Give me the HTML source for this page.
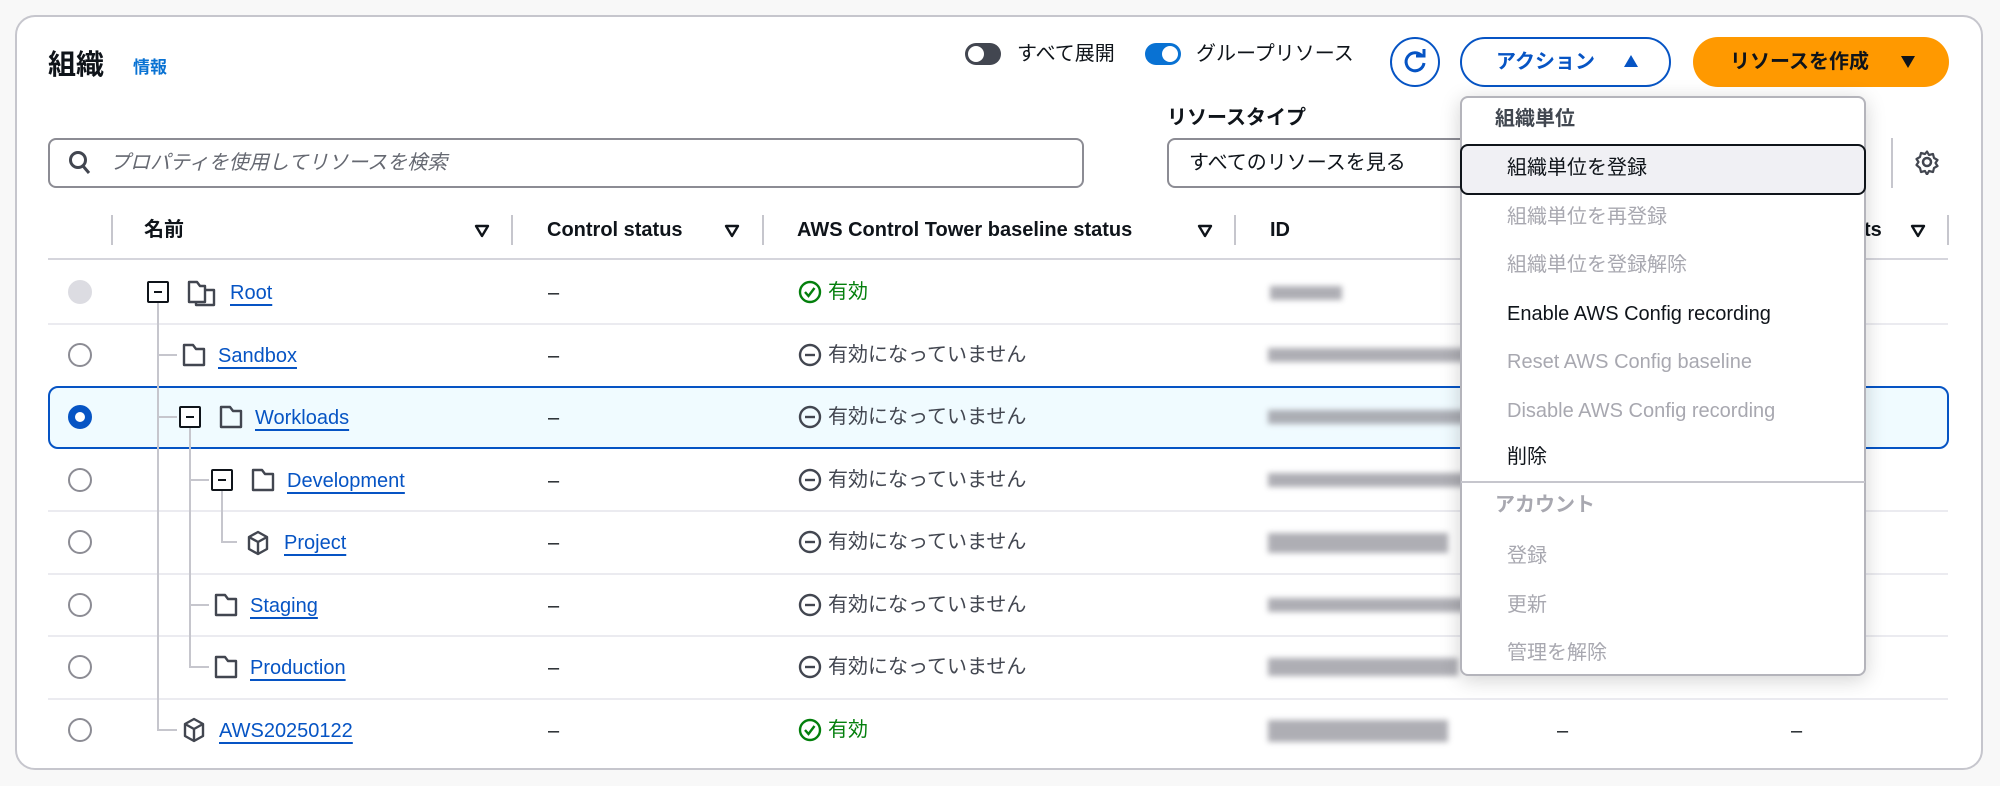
<!DOCTYPE html>
<html><head><meta charset="utf-8"><style>
*{box-sizing:border-box;margin:0;padding:0}
body{width:2000px;height:786px;background:#f8f8f8;font-family:"Liberation Sans","Noto Sans CJK JP",sans-serif;color:#0f141a;position:relative;overflow:hidden}
.a{position:absolute;white-space:nowrap;line-height:24px}
.card{position:absolute;left:15px;top:15px;width:1968px;height:755px;background:#fff;border:2px solid #c6c6cd;border-radius:20px}
.blue{color:#0654c4}
.lnk{color:#0654c4;text-decoration:underline;text-underline-offset:5px;text-decoration-thickness:2px;font-size:20px}
.hd{font-size:20px;font-weight:bold;color:#0f141a}
.sep{position:absolute;width:2px;height:30px;background:#c6c6cd;top:215px}
.rowline{position:absolute;left:48px;width:1900px;height:2px;background:#ebebf0}
.radio{position:absolute;left:68px;width:24px;height:24px;border:2px solid #8c8c94;border-radius:50%;background:#fff}
.dash{position:absolute;left:548px;font-size:20px;line-height:24px}
.st{position:absolute;left:798px;font-size:20px;line-height:24px;color:#424650;display:flex;align-items:center;gap:6px}
.st.ok{color:#037f0c}
.id{position:absolute;left:1268px;height:14px;background:#9a9aa2;filter:blur(3px);opacity:.8}
.vl{position:absolute;width:2px;background:#c6c6cd}
.hl{position:absolute;height:2px;background:#c6c6cd}
.box{position:absolute;width:22px;height:22px;border:2px solid #0f141a;border-radius:2px;background:#fff}
.box:after{content:"";position:absolute;left:5px;top:8px;width:8px;height:2px;background:#0f141a}
.mi{position:absolute;left:1507px;font-size:20px;line-height:24px;white-space:nowrap}
.dis{color:#a8a8b0}
</style></head><body>
<div class="card"></div>
<div class="a" style="left:48px;top:50px;font-size:28px;line-height:30px;font-weight:bold">組織</div>
<div class="a" style="left:133px;top:56px;font-size:17px;font-weight:bold;color:#0972d3">情報</div>

<div class="a" style="left:965px;top:43px;width:36px;height:22px;border-radius:11px;background:#424650"></div>
<div class="a" style="left:968px;top:46px;width:16px;height:16px;border-radius:50%;background:#fff"></div>
<div class="a" style="left:1017px;top:42px;font-size:20px">すべて展開</div>
<div class="a" style="left:1145px;top:43px;width:36px;height:22px;border-radius:11px;background:#0972d3"></div>
<div class="a" style="left:1162px;top:46px;width:16px;height:16px;border-radius:50%;background:#fff"></div>
<div class="a" style="left:1196px;top:42px;font-size:20px">グループリソース</div>

<div class="a" style="left:1390px;top:37px;width:50px;height:50px;border:2px solid #0654c4;border-radius:50%"></div>
<svg class="a" style="left:1402px;top:49px" width="26" height="26" viewBox="0 0 26 26"><path d="M20 7A9 9 0 1 0 22 14" fill="none" stroke="#0654c4" stroke-width="3"/><path d="M14 7h8V0" fill="none" stroke="#0654c4" stroke-width="3"/></svg>

<div class="a" style="left:1460px;top:37px;width:211px;height:50px;border:2px solid #0654c4;border-radius:25px"></div>
<div class="a blue" style="left:1496px;top:50px;font-size:20px;font-weight:bold">アクション</div>
<svg class="a" style="left:1623px;top:54px" width="16" height="14"><path d="M8 1L15 13H1z" fill="#0654c4"/></svg>
<div class="a" style="left:1693px;top:37px;width:256px;height:50px;background:#ff9900;border-radius:25px"></div>
<div class="a" style="left:1730px;top:50px;font-size:20px;font-weight:bold">リソースを作成</div>
<svg class="a" style="left:1900px;top:55px" width="16" height="14"><path d="M1 1H15L8 13z" fill="#0f141a"/></svg>

<div class="a" style="left:1167px;top:106px;font-size:20px;font-weight:bold">リソースタイプ</div>
<div class="a" style="left:48px;top:138px;width:1036px;height:50px;border:2px solid #8c8c94;border-radius:8px"></div>
<svg class="a" style="left:68px;top:150px" width="24" height="26" viewBox="0 0 24 26"><circle cx="10" cy="10" r="7.5" fill="none" stroke="#424650" stroke-width="3"/><path d="M15 16l6 7" stroke="#424650" stroke-width="3"/></svg>
<div class="a" style="left:110px;top:151px;font-size:20px;font-style:italic;color:#656871">プロパティを使用してリソースを検索</div>
<div class="a" style="left:1167px;top:138px;width:320px;height:50px;border:2px solid #8c8c94;border-radius:8px"></div>
<div class="a" style="left:1189px;top:151px;font-size:20px">すべてのリソースを見る</div>
<div class="a" style="left:1891px;top:138px;width:2px;height:50px;background:#c6c6cd"></div>
<svg class="a" style="left:1914px;top:149px" width="26" height="26" viewBox="0 0 26 26"><circle cx="13" cy="13" r="4" fill="none" stroke="#424650" stroke-width="2.5"/><path d="M13 2.5l2 3.5 4-1 1 4 3.5 2-2 3 2 3-3.5 2-1 4-4-1-2 3.5-2-3.5-4 1-1-4L2.5 16l2-3-2-3 3.5-2 1-4 4 1z" fill="none" stroke="#424650" stroke-width="2.2" stroke-linejoin="round"/></svg>

<div class="sep" style="left:111px"></div><div class="sep" style="left:511px"></div><div class="sep" style="left:762px"></div><div class="sep" style="left:1234px"></div><div class="sep" style="left:1947px"></div>
<div class="a hd" style="left:144px;top:218px">名前</div>
<div class="a hd" style="left:547px;top:218px">Control status</div>
<div class="a hd" style="left:797px;top:218px">AWS Control Tower baseline status</div>
<div class="a hd" style="left:1270px;top:218px">ID</div>
<div class="a hd" style="left:1864px;top:218px">ts</div>
<svg class="a" style="left:474px;top:224px" width="16" height="14"><path d="M2 2H14L8 12z" fill="none" stroke="#0f141a" stroke-width="2.4" stroke-linejoin="round"/></svg>
<svg class="a" style="left:724px;top:224px" width="16" height="14"><path d="M2 2H14L8 12z" fill="none" stroke="#0f141a" stroke-width="2.4" stroke-linejoin="round"/></svg>
<svg class="a" style="left:1197px;top:224px" width="16" height="14"><path d="M2 2H14L8 12z" fill="none" stroke="#0f141a" stroke-width="2.4" stroke-linejoin="round"/></svg>
<svg class="a" style="left:1910px;top:224px" width="16" height="14"><path d="M2 2H14L8 12z" fill="none" stroke="#0f141a" stroke-width="2.4" stroke-linejoin="round"/></svg>
<div class="rowline" style="top:258px;background:#d5d5dc"></div>

<div class="rowline" style="top:323px"></div>
<div class="rowline" style="top:510px"></div>
<div class="rowline" style="top:573px"></div>
<div class="rowline" style="top:635px"></div>
<div class="rowline" style="top:698px"></div>
<div class="a" style="left:48px;top:386px;width:1901px;height:63px;border:2px solid #0654c4;border-radius:10px;background:#f0fbff"></div>

<div class="radio" style="top:280px;background:#dcdce2;border-color:#dcdce2"></div>
<div class="radio" style="top:343px"></div>
<div class="radio" style="top:405px;border:7px solid #0654c4"></div>
<div class="radio" style="top:468px"></div>
<div class="radio" style="top:530px"></div>
<div class="radio" style="top:593px"></div>
<div class="radio" style="top:655px"></div>
<div class="radio" style="top:718px"></div>

<div class="vl" style="left:157px;top:300px;height:431px"></div>
<div class="hl" style="left:157px;top:354px;width:20px"></div>
<div class="hl" style="left:157px;top:416px;width:20px"></div>
<div class="hl" style="left:157px;top:729px;width:20px"></div>
<div class="vl" style="left:189px;top:425px;height:243px"></div>
<div class="hl" style="left:189px;top:479px;width:20px"></div>
<div class="hl" style="left:189px;top:604px;width:20px"></div>
<div class="hl" style="left:189px;top:666px;width:20px"></div>
<div class="vl" style="left:221px;top:488px;height:55px"></div>
<div class="hl" style="left:221px;top:541px;width:16px"></div>

<div class="box" style="left:147px;top:281px"></div>
<div class="box" style="left:179px;top:406px"></div>
<div class="box" style="left:211px;top:469px"></div>

<svg width="0" height="0" style="position:absolute"><defs>
<symbol id="fold" viewBox="0 0 24 24"><path d="M2 2h9l3 4h8v16H2z" fill="none" stroke="#424650" stroke-width="2.4" stroke-linejoin="round"/></symbol>
<symbol id="cube" viewBox="0 0 24 26"><path d="M12 2l9 5v12l-9 5-9-5V7z M3 7l9 5 9-5 M12 12v12" fill="none" stroke="#424650" stroke-width="2.4" stroke-linejoin="round"/></symbol>
</defs></svg>
<svg class="a" style="left:187px;top:280px" width="30" height="28" viewBox="0 0 30 28"><path d="M2 2h8l3 4h5v16H2z" fill="none" stroke="#424650" stroke-width="2.4" stroke-linejoin="round"/><path d="M18 10h9v15H9v-3" fill="none" stroke="#424650" stroke-width="2.4" stroke-linejoin="round"/></svg>
<svg class="a" style="left:182px;top:343px" width="24" height="24"><use href="#fold"/></svg>
<svg class="a" style="left:219px;top:405px" width="24" height="24"><use href="#fold"/></svg>
<svg class="a" style="left:251px;top:468px" width="24" height="24"><use href="#fold"/></svg>
<svg class="a" style="left:246px;top:530px" width="24" height="26"><use href="#cube"/></svg>
<svg class="a" style="left:214px;top:593px" width="24" height="24"><use href="#fold"/></svg>
<svg class="a" style="left:214px;top:655px" width="24" height="24"><use href="#fold"/></svg>
<svg class="a" style="left:182px;top:717px" width="24" height="26"><use href="#cube"/></svg>

<div class="a lnk" style="left:230px;top:281px">Root</div>
<div class="a lnk" style="left:218px;top:344px">Sandbox</div>
<div class="a lnk" style="left:255px;top:406px">Workloads</div>
<div class="a lnk" style="left:287px;top:469px">Development</div>
<div class="a lnk" style="left:284px;top:531px">Project</div>
<div class="a lnk" style="left:250px;top:594px">Staging</div>
<div class="a lnk" style="left:250px;top:656px">Production</div>
<div class="a lnk" style="left:219px;top:719px">AWS20250122</div>

<div class="dash" style="top:281px">–</div><div class="dash" style="top:344px">–</div><div class="dash" style="top:406px">–</div><div class="dash" style="top:469px">–</div><div class="dash" style="top:531px">–</div><div class="dash" style="top:594px">–</div><div class="dash" style="top:656px">–</div><div class="dash" style="top:719px">–</div>

<div class="st ok" style="top:280px"><svg width="24" height="24"><circle cx="12" cy="12" r="10" fill="none" stroke="#037f0c" stroke-width="2.4"/><path d="M7 12l3.5 4 6-8" fill="none" stroke="#037f0c" stroke-width="2.4"/></svg>有効</div>
<div class="st" style="top:343px"><svg width="24" height="24"><circle cx="12" cy="12" r="10" fill="none" stroke="#424650" stroke-width="2.4"/><path d="M7 12h10" stroke="#424650" stroke-width="2.4"/></svg>有効になっていません</div>
<div class="st" style="top:405px"><svg width="24" height="24"><circle cx="12" cy="12" r="10" fill="none" stroke="#424650" stroke-width="2.4"/><path d="M7 12h10" stroke="#424650" stroke-width="2.4"/></svg>有効になっていません</div>
<div class="st" style="top:468px"><svg width="24" height="24"><circle cx="12" cy="12" r="10" fill="none" stroke="#424650" stroke-width="2.4"/><path d="M7 12h10" stroke="#424650" stroke-width="2.4"/></svg>有効になっていません</div>
<div class="st" style="top:530px"><svg width="24" height="24"><circle cx="12" cy="12" r="10" fill="none" stroke="#424650" stroke-width="2.4"/><path d="M7 12h10" stroke="#424650" stroke-width="2.4"/></svg>有効になっていません</div>
<div class="st" style="top:593px"><svg width="24" height="24"><circle cx="12" cy="12" r="10" fill="none" stroke="#424650" stroke-width="2.4"/><path d="M7 12h10" stroke="#424650" stroke-width="2.4"/></svg>有効になっていません</div>
<div class="st" style="top:655px"><svg width="24" height="24"><circle cx="12" cy="12" r="10" fill="none" stroke="#424650" stroke-width="2.4"/><path d="M7 12h10" stroke="#424650" stroke-width="2.4"/></svg>有効になっていません</div>
<div class="st ok" style="top:718px"><svg width="24" height="24"><circle cx="12" cy="12" r="10" fill="none" stroke="#037f0c" stroke-width="2.4"/><path d="M7 12l3.5 4 6-8" fill="none" stroke="#037f0c" stroke-width="2.4"/></svg>有効</div>

<div class="id" style="top:286px;width:72px;left:1270px"></div>
<div class="id" style="top:348px;width:200px"></div>
<div class="id" style="top:410px;width:200px"></div>
<div class="id" style="top:473px;width:200px"></div>
<div class="id" style="top:533px;width:180px;height:20px"></div>
<div class="id" style="top:598px;width:200px"></div>
<div class="id" style="top:658px;width:190px;height:18px"></div>
<div class="id" style="top:720px;width:180px;height:22px"></div>
<div class="a" style="left:1557px;top:719px;font-size:20px">–</div>
<div class="a" style="left:1791px;top:719px;font-size:20px">–</div>

<div class="a" style="left:1460px;top:96px;width:406px;height:580px;background:#fff;border:2px solid #b4b4bb;border-radius:8px;box-shadow:0 4px 20px rgba(0,0,0,.18)"></div>
<div class="a" style="left:1495px;top:107px;font-size:20px;font-weight:bold;color:#414750">組織単位</div>
<div class="a" style="left:1460px;top:144px;width:406px;height:51px;border:2px solid #0f141a;border-radius:8px;background:#f0f0f4"></div>
<div class="mi" style="top:156px">組織単位を登録</div>
<div class="mi dis" style="top:205px">組織単位を再登録</div>
<div class="mi dis" style="top:253px">組織単位を登録解除</div>
<div class="mi" style="top:302px">Enable AWS Config recording</div>
<div class="mi dis" style="top:350px">Reset AWS Config baseline</div>
<div class="mi dis" style="top:399px">Disable AWS Config recording</div>
<div class="mi" style="top:445px">削除</div>
<div class="a" style="left:1461px;top:481px;width:404px;height:2px;background:#c6c6cd"></div>
<div class="a" style="left:1495px;top:493px;font-size:20px;font-weight:bold;color:#a8a8b0">アカウント</div>
<div class="mi dis" style="top:544px">登録</div>
<div class="mi dis" style="top:593px">更新</div>
<div class="mi dis" style="top:641px">管理を解除</div>
</body></html>
